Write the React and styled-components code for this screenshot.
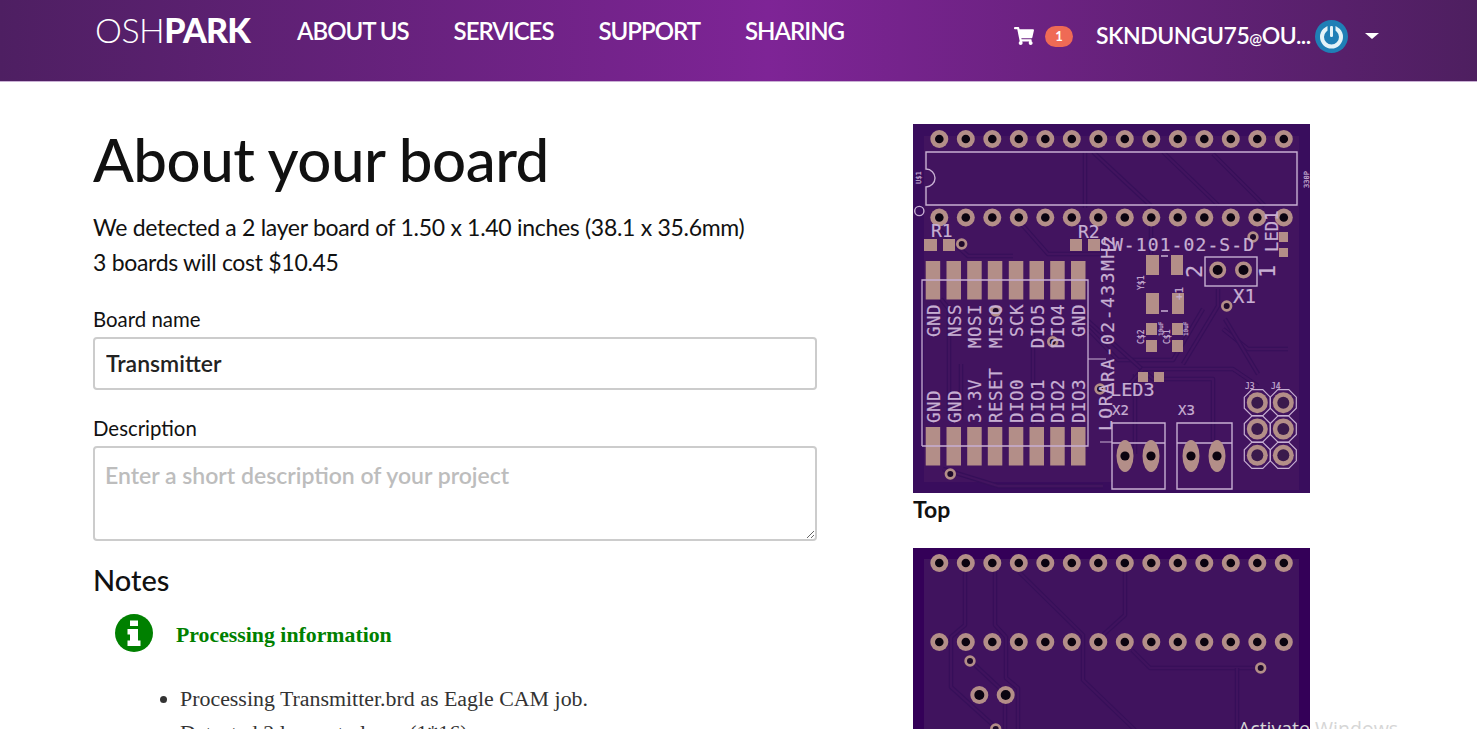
import React from "react";
import styled, { createGlobalStyle } from "styled-components";
import { FaShoppingCart } from "react-icons/fa";

const Global = createGlobalStyle`
  html, body { margin: 0; padding: 0; height: 100%; overflow: hidden; background: #fff; }
  #root { height: 100vh; overflow: hidden; position: relative; }
  * { box-sizing: border-box; }
`;
const sans = `"Lato", "Noto Sans", sans-serif`;

const Header = styled.header`
  height: 82px; display: flex; align-items: flex-start; padding-left: 95px; color: #fff;
  font-family: ${sans};
  background: linear-gradient(90deg, #4e1f62 0%, #7e2496 52%, #4e1f60 100%);
  border-bottom: 1px solid #c9b0d4;
`;
const Logo = styled.div`
  width: 202px; height: 60px; font-size: 34px; line-height: 60px; letter-spacing: -0.5px; font-weight: 300;
  b { font-weight: 900; letter-spacing: -0.9px; }
`;
const Nav = styled.nav`display: flex; gap: 45px; height: 62px; align-items: center;`;
const NavLink = styled.a`font-size: 24px; font-weight: 600; letter-spacing: -1px; line-height: 1;`;
const UserArea = styled.div`
  margin-left: auto; margin-right: 98px; display: flex; align-items: center; height: 72px;
`;
const Badge = styled.span`
  width: 28px; height: 21px; margin: 0 23px 0 11px; border-radius: 11px; background: #ef6a55;
  font-size: 13px; font-weight: 700; display: flex; align-items: center; justify-content: center;
`;
const Email = styled.span`font-size: 23px; font-weight: 600; letter-spacing: -0.5px; white-space: nowrap; width: 219px; margin-top: -3px;
  small { font-size: 15.5px; font-weight: 600; }`;
const Caret = styled.span`
  width: 0; height: 0; margin-left: 17px; border: 7.5px solid transparent; border-bottom: 0; border-top: 6px solid #fff;
`;

const Main = styled.main`
  display: grid; grid-template-columns: 724px 397px; column-gap: 96px; padding-left: 93px; font-family: ${sans}; color: #111;
`;
const Left = styled.section`display: flex; flex-direction: column; padding-top: 39px;`;
const Title = styled.h1`margin: 0 0 13px; font-size: 60px; line-height: 76px; font-weight: 500; letter-spacing: -0.5px;`;
const Summary = styled.p`margin: 0; font-size: 23px; line-height: 35px; letter-spacing: -0.3px;`;
const Label = styled.label`display: block; font-size: 20.4px; line-height: 28px; margin: ${p => p.$top}px 0 4px;`;
const TextInput = styled.input`
  display: block; width: 724px; height: 53px; padding: 0 11px 2px; border: 2px solid #ccc; border-radius: 4px;
  font: 600 23px ${sans}; color: #222; outline: none; background: #fff;
`;
const TextArea = styled.textarea`
  display: block; width: 724px; height: 95px; padding: 13px 10px; border: 2px solid #ccc; border-radius: 4px;
  font: 600 23px ${sans}; outline: none;
  &::placeholder { color: #bdbdbd; opacity: 1; }
`;
const NotesTitle = styled.h3`margin: 21px 0 0; font-size: 29px; line-height: 36px; font-weight: 500;`;
const InfoRow = styled.div`display: flex; align-items: center; gap: 23px; margin: 16px 0 0 22px; height: 38px; color: #008000;`;
const InfoTitle = styled.h4`margin: 4px 0 0; font: bold 21.8px "Liberation Serif", serif;`;
const NoteList = styled.ul`margin: 30px 0 0; padding: 0 0 0 87px; font: 21.9px/34px "Liberation Serif", serif; color: #333;`;

const Right = styled.section`padding-top: 42px;`;
const Caption = styled.div`font-size: 23px; font-weight: 700; line-height: 33px; height: 55px; color: #111;`;
const BoardSvg = styled.svg`display: block; width: 397px; height: 369px;
  text { font-family: "DejaVu Sans Mono", "Liberation Mono", monospace; fill: #c7afd2; stroke: #c7afd2; stroke-width: .2; }`;
const Watermark = styled.div`
  position: absolute; left: 1238px; top: 716px; font: 400 19.5px/26px "Open Sans", sans-serif; color: #d6d6d6; white-space: nowrap;
`;

const silk = "#c7afd2", pad = "#b38e88";
const xs = Array.from({ length: 14 }, (_, i) => 26.3 + i * 26.5);

const Hole = ({ x, y, r = 9, h = 4.3 }) => (
  <g>
    <circle cx={x} cy={y} r={r} fill={pad} />
    <circle cx={x} cy={y} r={h} fill="#0b0410" />
  </g>
);
const Via = ({ x, y }) => (
  <g>
    <circle cx={x} cy={y} r={5.7} fill={pad} />
    <circle cx={x} cy={y} r={3} fill="#1e0a2a" />
  </g>
);
const Pad = ({ x, y, w, h }) => <rect x={x} y={y} width={w} height={h} fill={pad} />;
const VText = ({ x, y, size = 17, anchor = "start", children, ls = 0 }) => (
  <text transform={`translate(${x} ${y}) rotate(-90)`} fontSize={size} textAnchor={anchor} letterSpacing={ls}>{children}</text>
);
const Trace = ({ d, fill = "#42145f", edge = "#360f59", w = 4.5 }) => (
  <g fill="none" strokeLinejoin="round">
    <path d={d} stroke={edge} strokeWidth={w} />
    <path d={d} stroke={fill} strokeWidth={w - 2.2} />
  </g>
);
const Octagon = ({ x, y }) => {
  const a = 13, b = 5.5;
  return (
    <g>
      <polygon points={`${x - b},${y - a} ${x + b},${y - a} ${x + a},${y - b} ${x + a},${y + b} ${x + b},${y + a} ${x - b},${y + a} ${x - a},${y + b} ${x - a},${y - b}`} fill="none" stroke={silk} strokeWidth="1.2" />
      <circle cx={x} cy={y} r={10.5} fill={pad} />
      <circle cx={x} cy={y} r={6} fill="#3a1a4c" />
    </g>
  );
};

const padX = [12.7, 33.5, 54.2, 74.8, 95.8, 116.5, 137.2, 158];
const upper = ["GND", "NSS", "MOSI", "MISO", "SCK", "DIO5", "DIO4", "GND"];
const lower = ["GND", "GND", "3.3V", "RESET", "DIO0", "DIO1", "DIO2", "DIO3"];

const topTraces = [
  "M172 28V84", "M250 28L305 81", "M300 30L352 82", "M180 28L238 82",
  "M20 100L55 132H100", "M105 96L135 130H195", "M238 100V130", "M290 185L260 236H205L175 205",
  "M305 165V182L270 240", "M28 175L36 185V290", "M30 345L85 362H190", "M48 240V296",
  "M120 200V300", "M165 188L240 255H300V330", "M222 250V330", "M310 205L335 225H375",
  "M210 268L230 245H320L345 262", "M312 195L345 250",
];
const bottomTraces = [
  "M52 24V77L38 89V139L80 177", "M82 24V77L93 89V130L105 140V210",
  "M106 24L170 87V132L222 182", "M212 24V67L190 87", "M219 102L237 120H342", "M324 120V200",
  "M62 117L92 145V200",
];

const TopBoard = () => (
  <BoardSvg viewBox="0 0 397 369" role="img" aria-label="Top of board">
    <rect width="397" height="369" fill="#42145f" />
    <path d="M0 369H397V366H200V358H11V12H386V366H397V0H0Z" fill="#390d5d" />
    {topTraces.map(d => <Trace key={d} d={d} />)}
    {xs.map(x => <Hole key={`a${x}`} x={x} y={15} />)}
    {xs.map(x => <Hole key={`b${x}`} x={x} y={93.5} />)}
    <path d="M13 28H384V81H13V63A9 9 0 0 0 13 45Z" fill="none" stroke={silk} strokeWidth="1.4" />
    <circle cx="6.3" cy="87" r="4.6" fill="none" stroke={silk} strokeWidth="1.4" />
    <VText x="7.5" y="60" size="7">U$1</VText>
    <VText x="396" y="64" size="7">330P</VText>
    <text x="18" y="113" fontSize="18">R1</text>
    <text x="165" y="114" fontSize="18">R2</text>
    <Pad x={11} y={115} w={13} h={12} /><Pad x={30} y={115} w={12} h={12} />
    <Pad x={157} y={115} w={12} h={12} /><Pad x={175} y={115} w={12} h={12} />
    <Pad x={366} y={108} w={9} h={10} /><Pad x={366} y={124} w={9} h={9} />
    <Via x={48.7} y={120} /><Via x={340} y={113} /><Via x={313.7} y={182} />
    <Via x={82.7} y={187} /><Via x={139.7} y={217.7} /><Via x={187} y={265} /><Via x={37.3} y={350} />
    <text x="187" y="127" fontSize="18" letterSpacing="1.1">SW-101-02-S-D</text>
    <VText x="365" y="128" size="17" ls=".2">LED1</VText>
    <VText x="289" y="154" size="22">2</VText>
    <VText x="362" y="154" size="22">1</VText>
    <rect x="292" y="133" width="52" height="29" fill="none" stroke={silk} strokeWidth="1.4" />
    <Hole x={304.7} y={146} r={8.5} h={5} /><Hole x={330.5} y={146} r={8.5} h={5} />
    <text x="320" y="179" fontSize="19">X1</text>
    <Pad x={233} y={131} w={13} h={20} /><Pad x={258} y={131} w={12} h={20} />
    <Pad x={233} y={169} w={13} h={21} /><Pad x={259} y={169} w={12} h={21} />
    <Pad x={233} y={199} w={11} h={12} /><Pad x={259} y={199} w={11} h={12} />
    <Pad x={233} y={216} w={11} h={12} /><Pad x={259} y={216} w={11} h={12} />
    <path d="M248 132H255M248 187H255" stroke={silk} strokeWidth="1.3" />
    <VText x="231" y="166" size="8">Y$1</VText>
    <VText x="231" y="220" size="8">C$2</VText>
    <VText x="257" y="220" size="8">C$1</VText>
    <VText x="250" y="212" size="6">10uF</VText>
    <VText x="275" y="212" size="6">10uF</VText>
    <VText x="270" y="176" size="11">+1</VText>
    {padX.map(x => <Pad key={`p${x}`} x={x} y={137} w={14.5} h={38.5} />)}
    {padX.map(x => <Pad key={`q${x}`} x={x} y={303} w={14.5} h={38.5} />)}
    <path d="M9 322V156H175V322H9" fill="none" stroke={silk} strokeWidth="1.3" />
    {upper.map((t, i) => <VText key={`u${i}`} x={padX[i] + 14} y={180} anchor="end" size="17.5" ls=".5">{t}</VText>)}
    {lower.map((t, i) => <VText key={`l${i}`} x={padX[i] + 14} y={299} size="17.5" ls=".5">{t}</VText>)}
    <VText x="201" y="258" ls="1.5" size="18">RA-02-433MHz</VText>
    <VText x="199" y="307" ls="1.5" size="18">LORA</VText>
    <path d="M175 235H193M187 318H199" stroke={silk} strokeWidth="1.2" />
    <Pad x={225} y={248} w={10} h={10} /><Pad x={241} y={248} w={10} h={10} />
    <text x="197" y="272" fontSize="18.5">LED3</text>
    <text x="199" y="291" fontSize="14">X2</text>
    <text x="265" y="291" fontSize="14">X3</text>
    <path d="M199 299H252V365H199ZM199 319H252M264 299H319V365H264ZM264 319H319" fill="none" stroke={silk} strokeWidth="1.4" />
    {[212, 238, 278, 304].map(x => (
      <g key={`o${x}`}>
        <ellipse cx={x} cy={332} rx={8.5} ry={16} fill={pad} />
        <circle cx={x} cy={332} r={4.6} fill="#0b0410" />
      </g>
    ))}
    {[344.3, 370.3].flatMap(x => [278.7, 305, 331.3].map(y => <Octagon key={`${x}${y}`} x={x} y={y} />))}
    <text x="332" y="265" fontSize="8">J3</text>
    <text x="358" y="265" fontSize="8">J4</text>
  </BoardSvg>
);

const BottomBoard = () => (
  <BoardSvg viewBox="0 0 397 369" role="img" aria-label="Bottom of board">
    <rect width="397" height="369" fill="#340058" />
    <rect x="11" y="11" width="375" height="350" fill="#40135e" />
    {bottomTraces.map(d => <Trace key={d} d={d} fill="#40135e" />)}
    {xs.map(x => <Hole key={`a${x}`} x={x} y={15} />)}
    {xs.map(x => <Hole key={`b${x}`} x={x} y={94} />)}
    <Via x={57} y={113} /><Via x={347.7} y={120} /><Via x={82.7} y={181} />
    <Hole x={66.3} y={147} r={9} h={5} /><Hole x={92.7} y={147} r={9} h={5} />
  </BoardSvg>
);

const Avatar = () => (
  <svg width="33" height="33" viewBox="0 0 33 33" aria-hidden="true">
    <circle cx="16.5" cy="16.5" r="16.5" fill="#1f7fb6" />
    <circle cx="16.5" cy="17" r="9.5" fill="none" stroke="#e4f3f8" strokeWidth="4" />
    <rect x="12.5" y="4" width="8" height="9" fill="#1f7fb6" />
    <rect x="15" y="6" width="3" height="11" rx="1.2" fill="#e4f3f8" />
  </svg>
);

const InfoIcon = () => (
  <svg width="38" height="38" viewBox="0 0 38 38" aria-hidden="true">
    <circle cx="19" cy="19" r="19" fill="currentColor" />
    <path d="M15 6.5H23V12H15ZM12.5 15H23V26.5H25.5V32H12.5V26.5H15V20.5H12.5Z" fill="#fff" />
  </svg>
);

export default function App() {
  return (
    <>
      <Global />
      <Header>
        <Logo>OSH<b>PARK</b></Logo>
        <Nav>
          <NavLink>ABOUT US</NavLink>
          <NavLink>SERVICES</NavLink>
          <NavLink>SUPPORT</NavLink>
          <NavLink>SHARING</NavLink>
        </Nav>
        <UserArea>
          <FaShoppingCart size={20} />
          <Badge>1</Badge>
          <Email>SKNDUNGU75<small>@</small>OU...</Email>
          <Avatar />
          <Caret />
        </UserArea>
      </Header>
      <Main>
        <Left>
          <Title>About your board</Title>
          <Summary>We detected a 2 layer board of 1.50 x 1.40 inches (38.1 x 35.6mm)</Summary>
          <Summary>3 boards will cost $10.45</Summary>
          <Label $top={25}>Board name</Label>
          <TextInput readOnly value="Transmitter" />
          <Label $top={24}>Description</Label>
          <TextArea placeholder="Enter a short description of your project" />
          <NotesTitle>Notes</NotesTitle>
          <InfoRow>
            <InfoIcon />
            <InfoTitle>Processing information</InfoTitle>
          </InfoRow>
          <NoteList>
            <li>Processing Transmitter.brd as Eagle CAM job.</li>
            <li>Detected 2 layers to layer (1*16)</li>
          </NoteList>
        </Left>
        <Right>
          <TopBoard />
          <Caption>Top</Caption>
          <BottomBoard />
        </Right>
      </Main>
      <Watermark>Activate Windows</Watermark>
    </>
  );
}
